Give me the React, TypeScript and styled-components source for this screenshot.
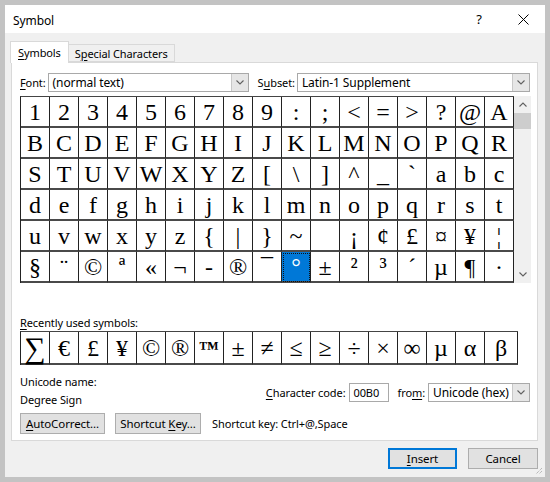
import styled, { createGlobalStyle } from "styled-components";

const GlobalStyle = createGlobalStyle`
  html, body {
    margin: 0;
    padding: 0;
    background: #c3c3c3;
  }
  body {
    width: 550px;
    height: 482px;
    overflow: hidden;
    font-family: "Segoe UI", "Noto Sans", sans-serif;
    font-size: 11px;
    letter-spacing: -0.1px;
    color: #000;
  }
`;

const Window = styled.div`
  position: relative;
  margin: 5px 0 0 5px;
  width: 540px;
  height: 472px;
  box-sizing: border-box;
  background: #f0f0f0;
  display: flex;
  flex-direction: column;
`;

const TitleBar = styled.div`
  height: 28px;
  background: #fff;
  display: flex;
  align-items: center;
  padding-left: 8px;
  font-size: 12px;
`;

const Title = styled.div`
  flex: 1;
  padding-top: 2px;
`;

const TitleButton = styled.div`
  width: 44px;
  height: 28px;
  display: flex;
  align-items: center;
  justify-content: center;
  font-size: 13px;
`;

const Body = styled.div`
  padding: 8px 0 0 5px;
  display: flex;
  flex-direction: column;
`;

const TabStrip = styled.div`
  display: flex;
  align-items: flex-end;
  height: 21px;
`;

const Tab = styled.div<{ $active?: boolean }>`
  box-sizing: border-box;
  height: ${(p) => (p.$active ? "22px" : "18px")};
  padding: 0 ${(p) => (p.$active ? "7px" : "6px")};
  margin-bottom: ${(p) => (p.$active ? "-1px" : "0")};
  background: ${(p) => (p.$active ? "#fff" : "#f0f0f0")};
  border: 1px solid #d9d9d9;
  border-bottom: ${(p) => (p.$active ? "none" : "1px solid #d9d9d9")};
  border-left: ${(p) => (p.$active ? "1px solid #d9d9d9" : "none")};
  display: flex;
  align-items: center;
  position: relative;
  z-index: ${(p) => (p.$active ? 1 : 0)};
`;

const Panel = styled.div`
  box-sizing: border-box;
  margin-left: 1px;
  width: 527px;
  height: 379px;
  background: #fff;
  border: 1px solid #d9d9d9;
  padding: 10px 7px 0 8px;
  display: flex;
  flex-direction: column;
`;

const FieldRow = styled.div`
  display: flex;
  align-items: center;
  height: 19px;
`;

const Label = styled.span<{ $gap?: number; $after?: number }>`
  margin-left: ${(p) => p.$gap ?? 0}px;
  margin-right: ${(p) => p.$after ?? 2}px;
  white-space: nowrap;
`;

const Combo = styled.div<{ $width?: number }>`
  box-sizing: border-box;
  height: 19px;
  width: ${(p) => (p.$width ? `${p.$width}px` : "auto")};
  flex: ${(p) => (p.$width ? "none" : "1")};
  border: 1px solid #a9a9a9;
  background: #fff;
  display: flex;
  align-items: center;
  padding-left: 4px;
  font-size: 12px;
`;

const ComboText = styled.span`
  flex: 1;
  white-space: nowrap;
`;

const DropButton = styled.div`
  width: 16px;
  height: 17px;
  background: #e6e6e6;
  border-left: 1px solid #c8c8c8;
  display: flex;
  align-items: center;
  justify-content: center;
`;

const GridArea = styled.div`
  display: flex;
  margin-top: 4px;
`;

const SymbolGrid = styled.div<{ $rowHeight: number; $cols: string }>`
  display: grid;
  grid-template-columns: ${(p) => p.$cols};
  grid-auto-rows: ${(p) => p.$rowHeight}px;
  border-left: 1px solid #222;
  border-top: 1px solid #444;
  align-self: flex-start;
`;

const Cell = styled.div<{ $selected?: boolean; $size?: number }>`
  box-sizing: border-box;
  border-right: 1px solid #222;
  border-bottom: 2px solid #4a4a4a;
  display: flex;
  align-items: center;
  justify-content: center;
  font-family: "Liberation Serif", "DejaVu Serif", serif;
  font-size: ${(p) => p.$size ?? 24}px;
  letter-spacing: 0;
  line-height: 1;
  color: ${(p) => (p.$selected ? "#fff" : "#000")};
  background: ${(p) => (p.$selected ? "#0078d7" : "#fff")};
  outline: ${(p) => (p.$selected ? "1px dotted #111" : "none")};
  outline-offset: -2px;
`;

const ScrollBar = styled.div`
  width: 17px;
  height: 187px;
  background: #f0f0f0;
  display: flex;
  flex-direction: column;
  align-items: center;
`;

const ScrollArrow = styled.div`
  height: 17px;
  width: 17px;
  display: flex;
  align-items: center;
  justify-content: center;
`;

const ScrollThumb = styled.div`
  width: 17px;
  height: 16px;
  background: #cdcdcd;
`;

const ScrollTrack = styled.div`
  flex: 1;
`;

const SectionLabel = styled.div`
  margin-top: 31px;
  height: 17px;
  line-height: 17px;
`;

const InfoArea = styled.div`
  display: flex;
  margin-top: 8px;
`;

const InfoText = styled.div`
  flex: 1;
  line-height: 18px;
`;

const CodeRow = styled.div`
  display: flex;
  align-items: center;
  margin-top: 10px;
  height: 19px;
`;

const CodeInput = styled.div`
  box-sizing: border-box;
  width: 40px;
  height: 19px;
  border: 1px solid #a9a9a9;
  padding-left: 3px;
  line-height: 17px;
  font-size: 11px;
  margin-right: 8px;
`;

const ButtonRow = styled.div<{ $end?: boolean }>`
  display: flex;
  align-items: center;
  justify-content: ${(p) => (p.$end ? "flex-end" : "flex-start")};
  gap: ${(p) => (p.$end ? 11 : 10)}px;
`;

const PushButton = styled.div<{ $width: number; $default?: boolean }>`
  box-sizing: border-box;
  width: ${(p) => p.$width}px;
  height: 21px;
  background: #e1e1e1;
  border: ${(p) => (p.$default ? "2px solid #0078d7" : "1px solid #adadad")};
  display: flex;
  align-items: center;
  justify-content: center;
  white-space: nowrap;
  font-size: 11.5px;
`;

const Hint = styled.span`
  margin-left: 1px;
  white-space: nowrap;
`;

const Grip = styled.svg`
  position: absolute;
  right: 2px;
  bottom: 2px;
`;

const U = styled.span`
  text-decoration: underline;
  text-underline-offset: 2px;
`;

const rows = [
  "1 2 3 4 5 6 7 8 9 : ; < = > ? @ A",
  "B C D E F G H I J K L M N O P Q R",
  "S T U V W X Y Z [ \\ ] ^ _ ` a b c",
  "d e f g h i j k l m n o p q r s t",
  "u v w x y z { | } ~ \u00a0 ¡ ¢ £ ¤ ¥ ¦",
  "§ ¨ © ª « ¬ - ® ¯ ° ± ² ³ ´ µ ¶ ·",
];

const symbols = rows.flatMap((r) => r.split(" "));

const recent = ["∑", "€", "£", "¥", "©", "®", "™", "±", "≠", "≤", "≥", "÷", "×", "∞", "µ", "α", "β"];

function Chevron({ up }: { up?: boolean }) {
  return (
    <svg width="8" height="5" viewBox="0 0 8 5">
      <path
        d={up ? "M0.5 4.5 L4 1 L7.5 4.5" : "M0.5 0.5 L4 4 L7.5 0.5"}
        fill="none"
        stroke="#606060"
        strokeWidth="1.1"
      />
    </svg>
  );
}

function App() {
  return (
    <>
      <GlobalStyle />
      <Window>
        <TitleBar>
          <Title>Symbol</Title>
          <TitleButton>?</TitleButton>
          <TitleButton>
            <svg width="11" height="11" viewBox="0 0 11 11">
              <path d="M0.5 0.5 L10.5 10.5 M10.5 0.5 L0.5 10.5" stroke="#000" strokeWidth="1" />
            </svg>
          </TitleButton>
        </TitleBar>
        <Body>
          <TabStrip>
            <Tab $active>
              <span>
                <U>S</U>ymbols
              </span>
            </Tab>
            <Tab>
              <span>
                S<U>p</U>ecial Characters
              </span>
            </Tab>
          </TabStrip>
          <Panel>
            <FieldRow>
              <Label>
                <U>F</U>ont:
              </Label>
              <Combo $width={201}>
                <ComboText>(normal text)</ComboText>
                <DropButton>
                  <Chevron />
                </DropButton>
              </Combo>
              <Label $gap={9}>
                S<U>u</U>bset:
              </Label>
              <Combo>
                <ComboText>Latin-1 Supplement</ComboText>
                <DropButton>
                  <Chevron />
                </DropButton>
              </Combo>
            </FieldRow>

            <GridArea>
              <SymbolGrid $rowHeight={31} $cols="repeat(17, 29px)">
                {symbols.map((s, i) => (
                  <Cell key={i} $selected={s === "°"}>
                    {s === "\u00a0" ? "" : s}
                  </Cell>
                ))}
              </SymbolGrid>
              <ScrollBar>
                <ScrollArrow>
                  <Chevron up />
                </ScrollArrow>
                <ScrollThumb />
                <ScrollTrack />
                <ScrollArrow>
                  <Chevron />
                </ScrollArrow>
              </ScrollBar>
            </GridArea>

            <SectionLabel>
              <U>R</U>ecently used symbols:
            </SectionLabel>
            <SymbolGrid $rowHeight={33} $cols="repeat(16, 29px) 33px">
              {recent.map((s, i) => (
                <Cell key={i} $size={s === "∑" ? 30 : s === "™" ? 20 : 24}>
                  {s === "™" ? <b>{s}</b> : s}
                </Cell>
              ))}
            </SymbolGrid>

            <InfoArea>
              <InfoText>
                <div>Unicode name:</div>
                <div>Degree Sign</div>
              </InfoText>
              <CodeRow>
                <Label $after={4}>
                  <U>C</U>haracter code:
                </Label>
                <CodeInput>00B0</CodeInput>
                <Label $after={3}>
                  fro<U>m</U>:
                </Label>
                <Combo $width={102}>
                  <ComboText>Unicode (hex)</ComboText>
                  <DropButton>
                    <Chevron />
                  </DropButton>
                </Combo>
              </CodeRow>
            </InfoArea>

            <ButtonRow style={{ marginTop: 4 }}>
              <PushButton $width={85}>
                <span>
                  <U>A</U>utoCorrect...
                </span>
              </PushButton>
              <PushButton $width={86}>
                <span>
                  Shortcut <U>K</U>ey...
                </span>
              </PushButton>
              <Hint>Shortcut key: Ctrl+@,Space</Hint>
            </ButtonRow>
          </Panel>

          <ButtonRow $end style={{ marginTop: 7, width: 528 }}>
            <PushButton $width={69} $default>
              <span>
                <U>I</U>nsert
              </span>
            </PushButton>
            <PushButton $width={70}>Cancel</PushButton>
          </ButtonRow>
        </Body>
        <Grip width="10" height="10" viewBox="0 0 10 10">
          <path d="M9 3 L3 9 M9 6 L6 9" stroke="#a0a0a0" strokeWidth="1" strokeDasharray="1 1" />
        </Grip>
      </Window>
    </>
  );
}

export default App;
